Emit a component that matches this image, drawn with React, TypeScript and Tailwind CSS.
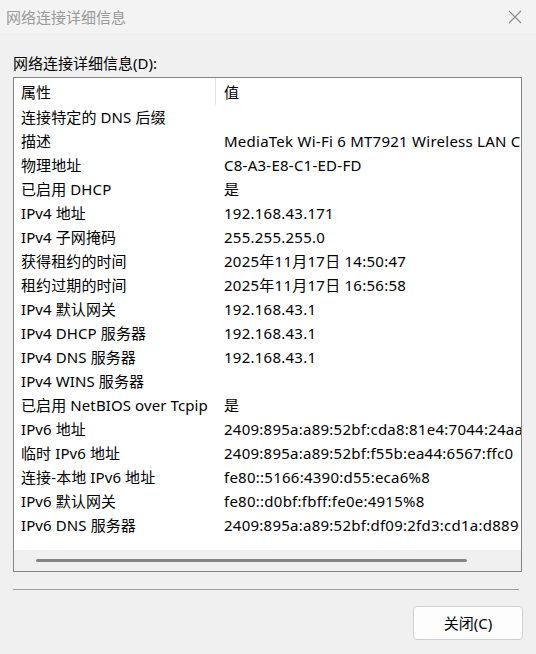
import React from 'react'

const rows: [string, string][] = [
  ['连接特定的 DNS 后缀', ''],
  ['描述', 'MediaTek Wi-Fi 6 MT7921 Wireless LAN Card'],
  ['物理地址', 'C8-A3-E8-C1-ED-FD'],
  ['已启用 DHCP', '是'],
  ['IPv4 地址', '192.168.43.171'],
  ['IPv4 子网掩码', '255.255.255.0'],
  ['获得租约的时间', '2025年11月17日 14:50:47'],
  ['租约过期的时间', '2025年11月17日 16:56:58'],
  ['IPv4 默认网关', '192.168.43.1'],
  ['IPv4 DHCP 服务器', '192.168.43.1'],
  ['IPv4 DNS 服务器', '192.168.43.1'],
  ['IPv4 WINS 服务器', ''],
  ['已启用 NetBIOS over Tcpip', '是'],
  ['IPv6 地址', '2409:895a:a89:52bf:cda8:81e4:7044:24aa'],
  ['临时 IPv6 地址', '2409:895a:a89:52bf:f55b:ea44:6567:ffc0'],
  ['连接-本地 IPv6 地址', 'fe80::5166:4390:d55:eca6%8'],
  ['IPv6 默认网关', 'fe80::d0bf:fbff:fe0e:4915%8'],
  ['IPv6 DNS 服务器', '2409:895a:a89:52bf:df09:2fd3:cd1a:d889'],
]

function Row({ name, value }: { name: string; value: string }) {
  return (
    <div className="flex h-[24px] items-center whitespace-nowrap">
      <div className="w-[203px] shrink-0 pl-[7px] tracking-[0.1px]">{name}</div>
      <div className="pl-[7px] tracking-[0.25px]">{value}</div>
    </div>
  )
}

export default function App() {
  return (
    <div
      className="flex h-[654px] w-[536px] flex-col bg-[#f0f0f0] text-[15px] leading-[20px] text-black"
      style={{ fontFamily: '"Noto Sans", "Noto Sans CJK SC", sans-serif' }}
    >
      {/* title bar */}
      <div className="flex h-[33px] items-center justify-between bg-[#f3f3f3] pl-[6px] pr-[14px]">
        <span className="text-[#9a9a9a]">网络连接详细信息</span>
        <svg width="14" height="14" viewBox="0 0 14 14" className="mt-[1px]">
          <path d="M1 1 L13 13 M13 1 L1 13" stroke="#8c8c8c" strokeWidth="1.1" fill="none" />
        </svg>
      </div>

      <div className="flex flex-col px-[13px]">
        <div className="mt-[20px] h-[20px]">网络连接详细信息(D):</div>

        <div className="mt-[4px] flex h-[495px] w-[509px] flex-col overflow-hidden border border-[#838383] bg-white">
          <div className="flex h-[27px] shrink-0 items-center">
            <div className="h-full w-[202px] shrink-0 border-r border-[#e5e5e5] pl-[7px] pt-[4px]">属性</div>
            <div className="h-full pl-[8px] pt-[4px]">值</div>
          </div>
          <div className="flex-1 overflow-hidden">
            {rows.map(([n, v]) => (
              <Row key={n} name={n} value={v} />
            ))}
          </div>
          <div className="flex h-[21px] shrink-0 items-center bg-[#f0f0f0] pl-[22px]">
            <div className="h-[3px] w-[431px] rounded-full bg-[#858585]" />
          </div>
        </div>

        <div className="mt-[17px] h-px w-[506px] bg-[#a0a0a0]" />

        <div className="mt-[16px] flex justify-end">
          <button className="h-[34px] w-[110px] rounded-[4px] border border-[#d0d0d0] bg-[#fdfdfd] text-[15px]">
            关闭(C)
          </button>
        </div>
      </div>
    </div>
  )
}
